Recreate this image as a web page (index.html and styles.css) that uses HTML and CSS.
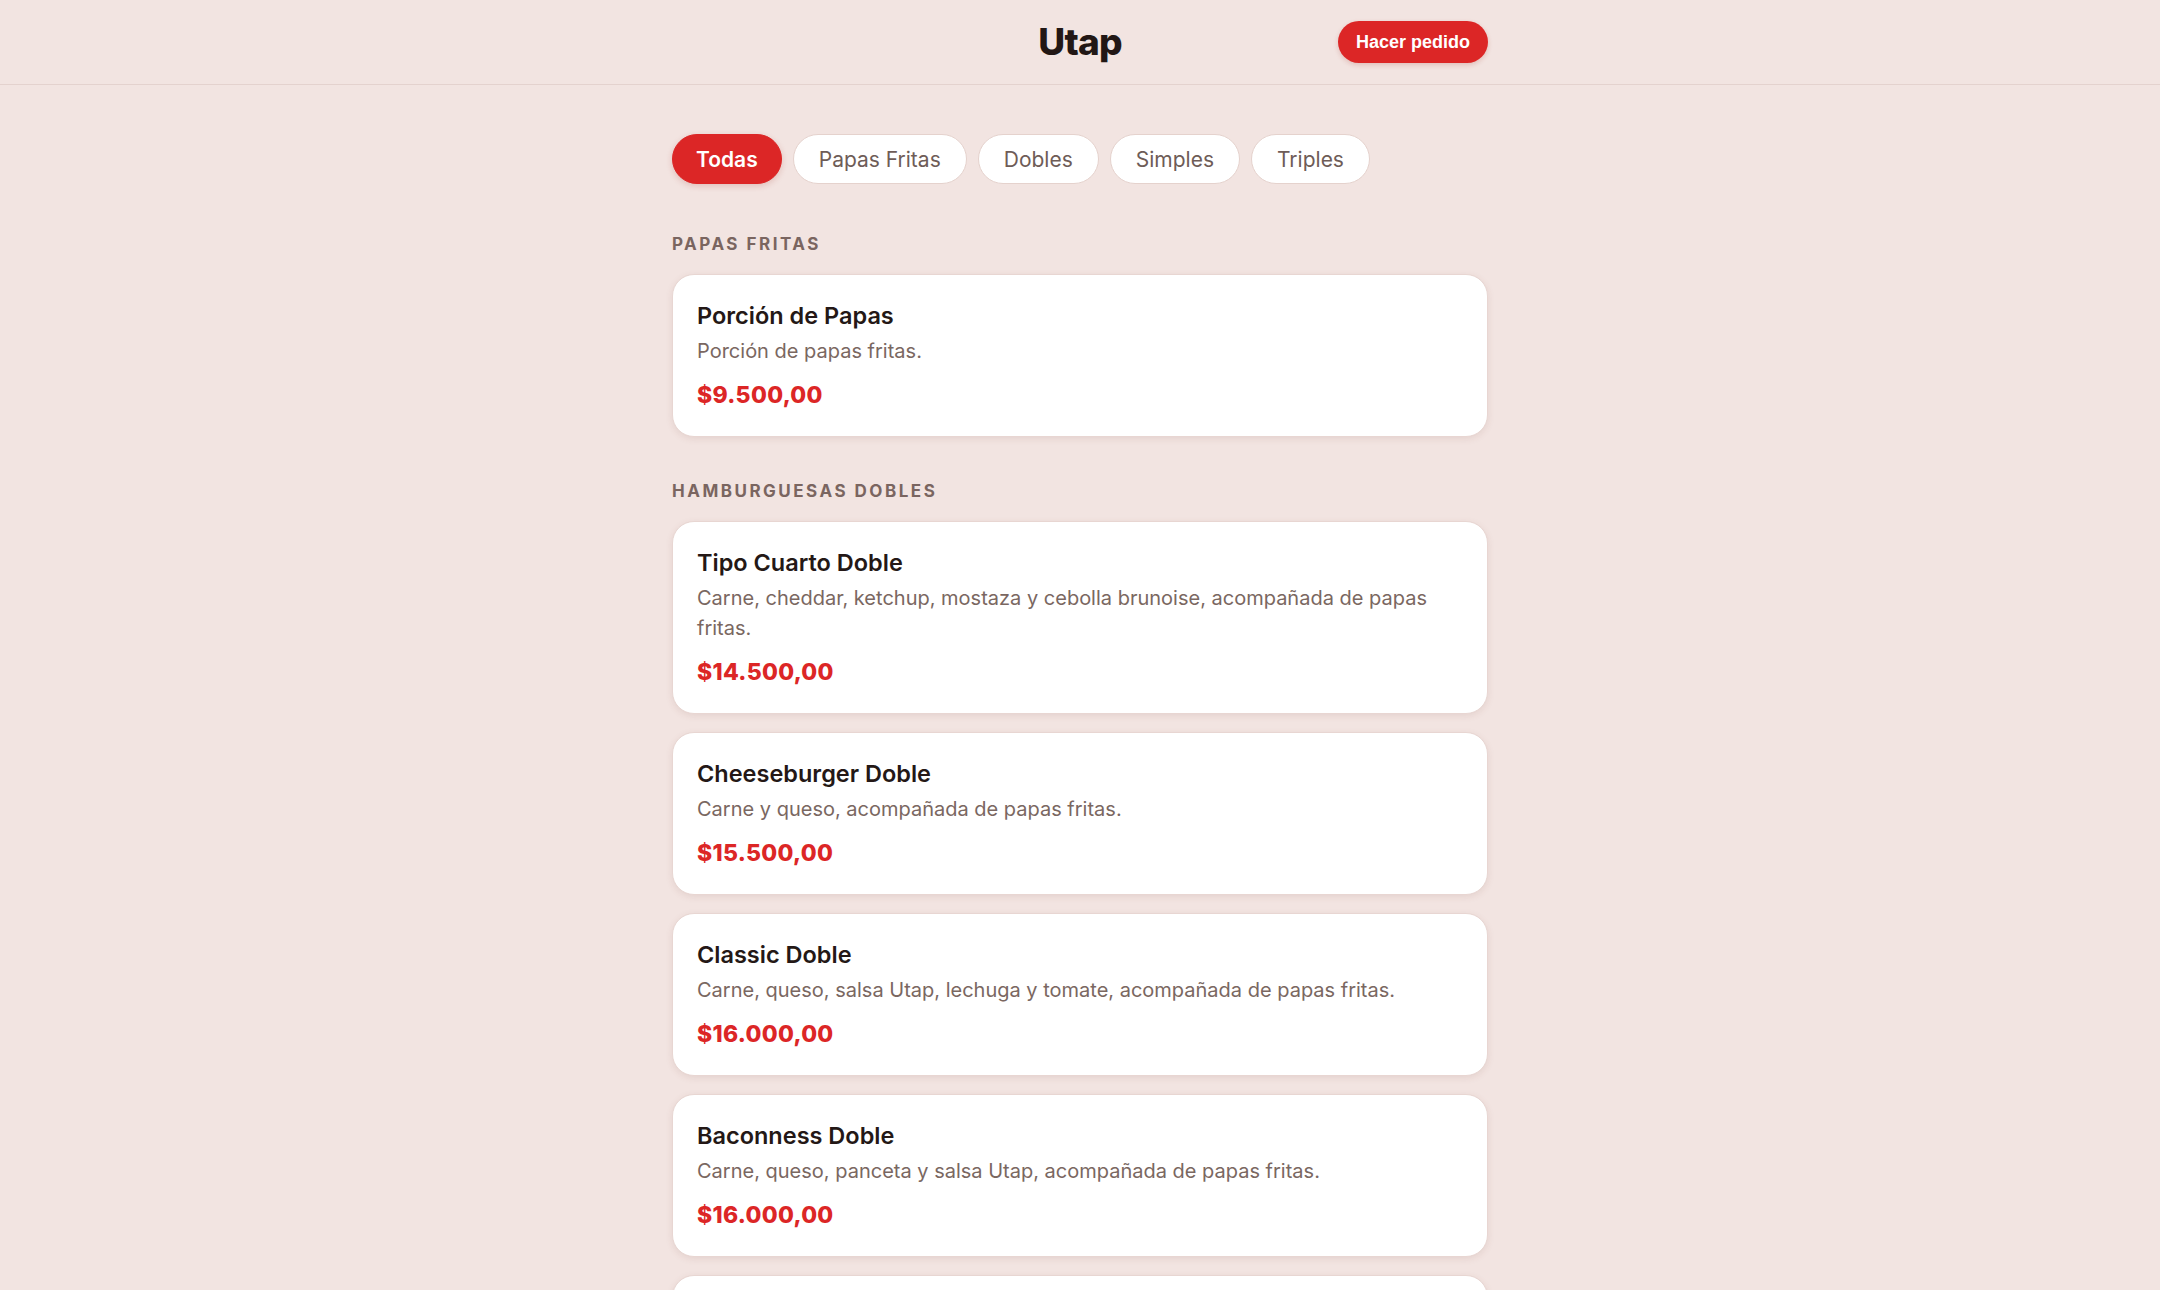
FILE: index.html
```html
<!DOCTYPE html>
<html lang="es">
<head>
<meta charset="utf-8">
<title>Utap</title>
<link rel="stylesheet" href="styles.css">
</head>
<body>
<header class="topbar">
  <div class="topbar-inner">
    <span></span>
    <h1 class="brand">Utap</h1>
    <button class="order-btn">Hacer pedido</button>
  </div>
</header>
<main class="menu">
  <nav class="chips">
    <button class="chip active">Todas</button>
    <button class="chip">Papas Fritas</button>
    <button class="chip">Dobles</button>
    <button class="chip">Simples</button>
    <button class="chip">Triples</button>
  </nav>

  <section class="section">
    <h2 class="section-title">Papas Fritas</h2>
    <div class="cards">
      <article class="card">
        <h3 class="card-title">Porción de Papas</h3>
        <p class="card-desc">Porción de papas fritas.</p>
        <p class="card-price">$9.500,00</p>
      </article>
    </div>
  </section>

  <section class="section">
    <h2 class="section-title">Hamburguesas Dobles</h2>
    <div class="cards">
      <article class="card">
        <h3 class="card-title">Tipo Cuarto Doble</h3>
        <p class="card-desc">Carne, cheddar, ketchup, mostaza y cebolla brunoise, acompañada de papas fritas.</p>
        <p class="card-price">$14.500,00</p>
      </article>
      <article class="card">
        <h3 class="card-title">Cheeseburger Doble</h3>
        <p class="card-desc">Carne y queso, acompañada de papas fritas.</p>
        <p class="card-price">$15.500,00</p>
      </article>
      <article class="card">
        <h3 class="card-title">Classic Doble</h3>
        <p class="card-desc">Carne, queso, salsa Utap, lechuga y tomate, acompañada de papas fritas.</p>
        <p class="card-price">$16.000,00</p>
      </article>
      <article class="card">
        <h3 class="card-title">Baconness Doble</h3>
        <p class="card-desc">Carne, queso, panceta y salsa Utap, acompañada de papas fritas.</p>
        <p class="card-price">$16.000,00</p>
      </article>
      <article class="card">
        <h3 class="card-title">Utap Doble</h3>
        <p class="card-desc">Carne, queso, panceta, huevo y salsa Utap, acompañada de papas fritas.</p>
        <p class="card-price">$17.000,00</p>
      </article>
    </div>
  </section>
</main>
</body>
</html>
```

FILE: styles.css
```css
* { box-sizing: border-box; }

html, body {
  margin: 0;
  padding: 0;
}

body {
  background: #f2e4e1;
  font-family: Inter, Roboto, sans-serif;
  color: #2a1d1a;
}

.topbar {
  border-bottom: 1px solid #e4d2ce;
}

.topbar-inner {
  max-width: 816px;
  margin: 0 auto;
  height: 84px;
  display: grid;
  grid-template-columns: 1fr auto 1fr;
  align-items: center;
}

.brand {
  margin: 0 0 2px;
  font-size: 37px;
  font-weight: 800;
  letter-spacing: -0.8px;
  color: #221715;
}

.order-btn {
  justify-self: end;
  height: 42px;
  padding: 0 18px;
  border: none;
  border-radius: 21px;
  background: #dc2626;
  color: #fff;
  font-family: "Liberation Sans", Arial, sans-serif;
  font-weight: 700;
  font-size: 18px;
  box-shadow: 0 2px 5px rgba(160, 40, 30, 0.2);
}

.menu {
  max-width: 816px;
  margin: 0 auto;
  padding: 49px 0 40px;
}

.chips {
  display: flex;
  gap: 11px;
  margin-bottom: 50px;
}

.chip {
  height: 50px;
  padding: 0 25px;
  border-radius: 25px;
  border: 1.5px solid #e5d2cd;
  background: #fff;
  color: #6e5c57;
  font-family: Inter, Roboto, sans-serif;
  font-size: 21px;
  font-weight: 400;
}

.chip.active {
  padding: 0 23px;
  background: #dc2626;
  border-color: #dc2626;
  color: #fff;
  font-weight: 600;
  box-shadow: 0 2px 6px rgba(160, 40, 30, 0.2);
}

.section {
  margin-bottom: 44px;
}

.section-title {
  margin: 0 0 20px;
  font-size: 17px;
  font-weight: 700;
  letter-spacing: 2.5px;
  text-transform: uppercase;
  color: #7a6560;
  line-height: 20px;
}

.cards {
  display: flex;
  flex-direction: column;
  gap: 18px;
}

.card {
  background: #fff;
  border: 1.5px solid #e8d6d2;
  border-radius: 22px;
  padding: 25px 24px 25px;
  box-shadow: 0 2px 7px rgba(120, 60, 50, 0.1);
}

.card-title {
  margin: 0;
  font-size: 23.5px;
  line-height: 32px;
  font-weight: 600;
  color: #241816;
}

.card-desc {
  margin: 4px 0 0;
  font-size: 20px;
  line-height: 30px;
  color: #7a6761;
}

.card-price {
  margin: 13px 0 0;
  font-size: 23px;
  line-height: 32px;
  font-weight: 800;
  letter-spacing: 0.3px;
  color: #dc2626;
}
```
